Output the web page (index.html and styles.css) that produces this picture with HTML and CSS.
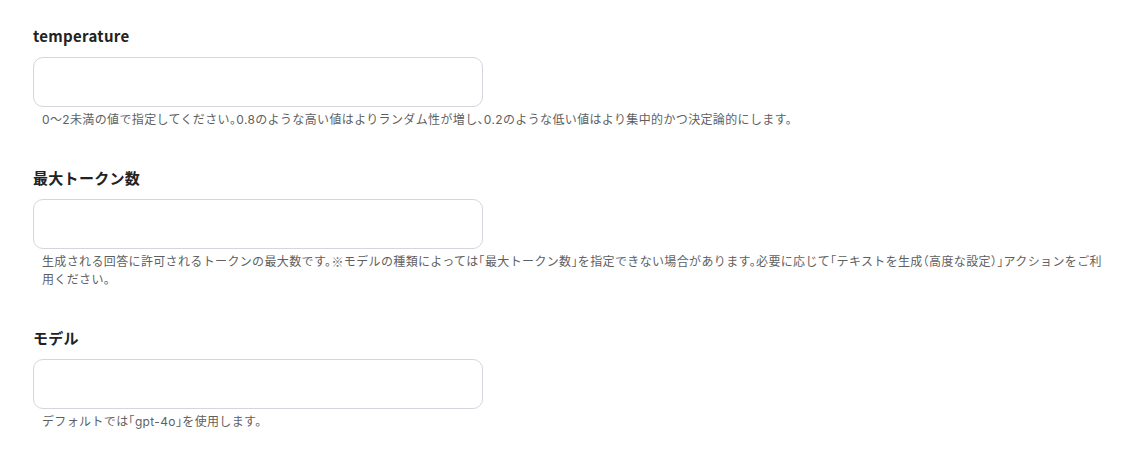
FILE: index.html
```html
<!DOCTYPE html>
<html lang="ja">
<head>
<meta charset="utf-8">
<link rel="stylesheet" href="styles.css">
</head>
<body>
<div class="form">
  <div class="field">
    <label class="label">temperature</label>
    <input class="input" type="text">
    <p class="help">0〜2未満の値で指定してください。0.8のような高い値はよりランダム性が増し、0.2のような低い値はより集中的かつ決定論的にします。</p>
  </div>
  <div class="field">
    <label class="label">最大トークン数</label>
    <input class="input" type="text">
    <p class="help">生成される回答に許可されるトークンの最大数です。<span class="cjk">※</span>モデルの種類によっては「最大トークン数」を指定できない場合があります。必要に応じて「テキストを生成（高度な設定）」アクションをご利用ください。</p>
  </div>
  <div class="field">
    <label class="label">モデル</label>
    <input class="input" type="text">
    <p class="help">デフォルトでは「gpt-4o」を使用します。</p>
  </div>
</div>
</body>
</html>
```
FILE: styles.css
```css
html, body {
  margin: 0;
  padding: 0;
  background: #ffffff;
}
body {
  font-family: Inter, "Noto Sans CJK JP", sans-serif;
  color: #222;
}
.form {
  padding: 26px 33px 0 33px;
  display: flex;
  flex-direction: column;
  gap: 39px;
}
.field {
  display: flex;
  flex-direction: column;
  width: 1074px;
}
.label {
  font-family: "Noto Sans CJK JP", sans-serif;
  font-size: 15px;
  font-weight: 600;
  line-height: 20px;
  letter-spacing: 0.02em;
  color: #222;
  margin-bottom: 11px;
}
.input {
  box-sizing: border-box;
  width: 450px;
  height: 50px;
  border: 1px solid #d3d6dc;
  border-radius: 10px;
  padding: 0 12px;
  font-size: 14px;
  outline: none;
}
.help {
  margin: 4px 0 0 9px;
  font-size: 12px;
  line-height: 18px;
  letter-spacing: 0.03em;
  color: #5f5f5f;
  font-feature-settings: "halt";
}
.cjk {
  font-family: "Noto Sans CJK JP", sans-serif;
  line-height: 18px;
  vertical-align: top;
}
```
